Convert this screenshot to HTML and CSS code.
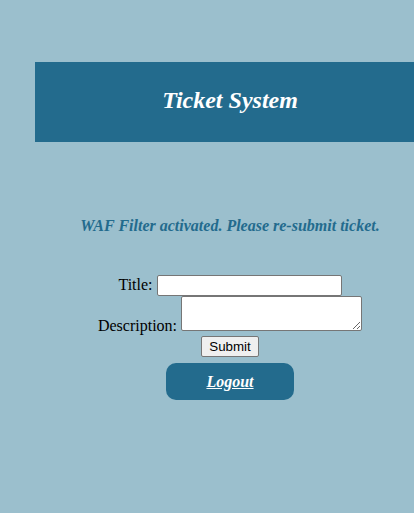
FILE: index.html
```html
<!DOCTYPE html>
<html>
<head>
<meta charset="utf-8">
<link rel="stylesheet" href="styles.css">
</head>
<body>
<div class="page">
  <header class="header"><h1 class="title">Ticket System</h1></header>
  <p class="message">WAF Filter activated. Please re-submit ticket.</p>
  <form class="form">
    <label class="label">Title:</label> <input class="text-input" type="text"><br>
    <label class="label">Description:</label> <textarea class="text-area"></textarea><br>
    <button class="submit" type="button">Submit</button>
  </form>
  <div class="logout-wrap"><a class="logout" href="#">Logout</a></div>
</div>
</body>
</html>
```
FILE: styles.css
```css
html, body {
  margin: 0;
  overflow: hidden;
}
body {
  background: #9bbfcd;
  font-family: "Liberation Serif", serif;
  font-size: 16px;
  color: #000;
}
.page {
  width: 390px;
  margin-left: 35px;
  padding-top: 62px;
  text-align: center;
}
.header {
  background: #236b8d;
  height: 80px;
  box-sizing: border-box;
  padding-bottom: 4px;
  display: flex;
  align-items: center;
  justify-content: center;
}
.title {
  margin: 0;
  color: #fff;
  font-size: 24px;
  font-style: italic;
  font-weight: bold;
}
.message {
  margin: 75px 0 0;
  color: #236b8d;
  font-style: italic;
  font-weight: bold;
  font-size: 16px;
  line-height: 18px;
}
.form {
  margin-top: 40px;
}
.label {
  font-size: 16px;
}
.text-input {
  width: 185px;
  height: 21px;
  box-sizing: border-box;
  margin: 0;
  border: 1px solid #767676;
  border-radius: 2px;
  background: #fff;
}
.text-area {
  width: 181px;
  height: 35px;
  box-sizing: border-box;
  margin: 0;
  border: 1px solid #767676;
  border-radius: 2px;
  vertical-align: baseline;
}
.submit {
  font-family: "Liberation Sans", Arial, sans-serif;
  font-size: 13.33px;
  width: 58px;
  height: 21px;
  margin-top: 1px;
  padding: 0;
  border: 1px solid #767676;
  border-radius: 2px;
  background: #efefef;
  color: #000;
}
.logout-wrap {
  margin-top: 6px;
}
.logout {
  display: inline-block;
  width: 128px;
  height: 37px;
  line-height: 37px;
  box-sizing: border-box;
  background: #236b8d;
  border-radius: 10px;
  color: #fff;
  font-weight: bold;
  font-style: italic;
  text-decoration: underline;
}
```
